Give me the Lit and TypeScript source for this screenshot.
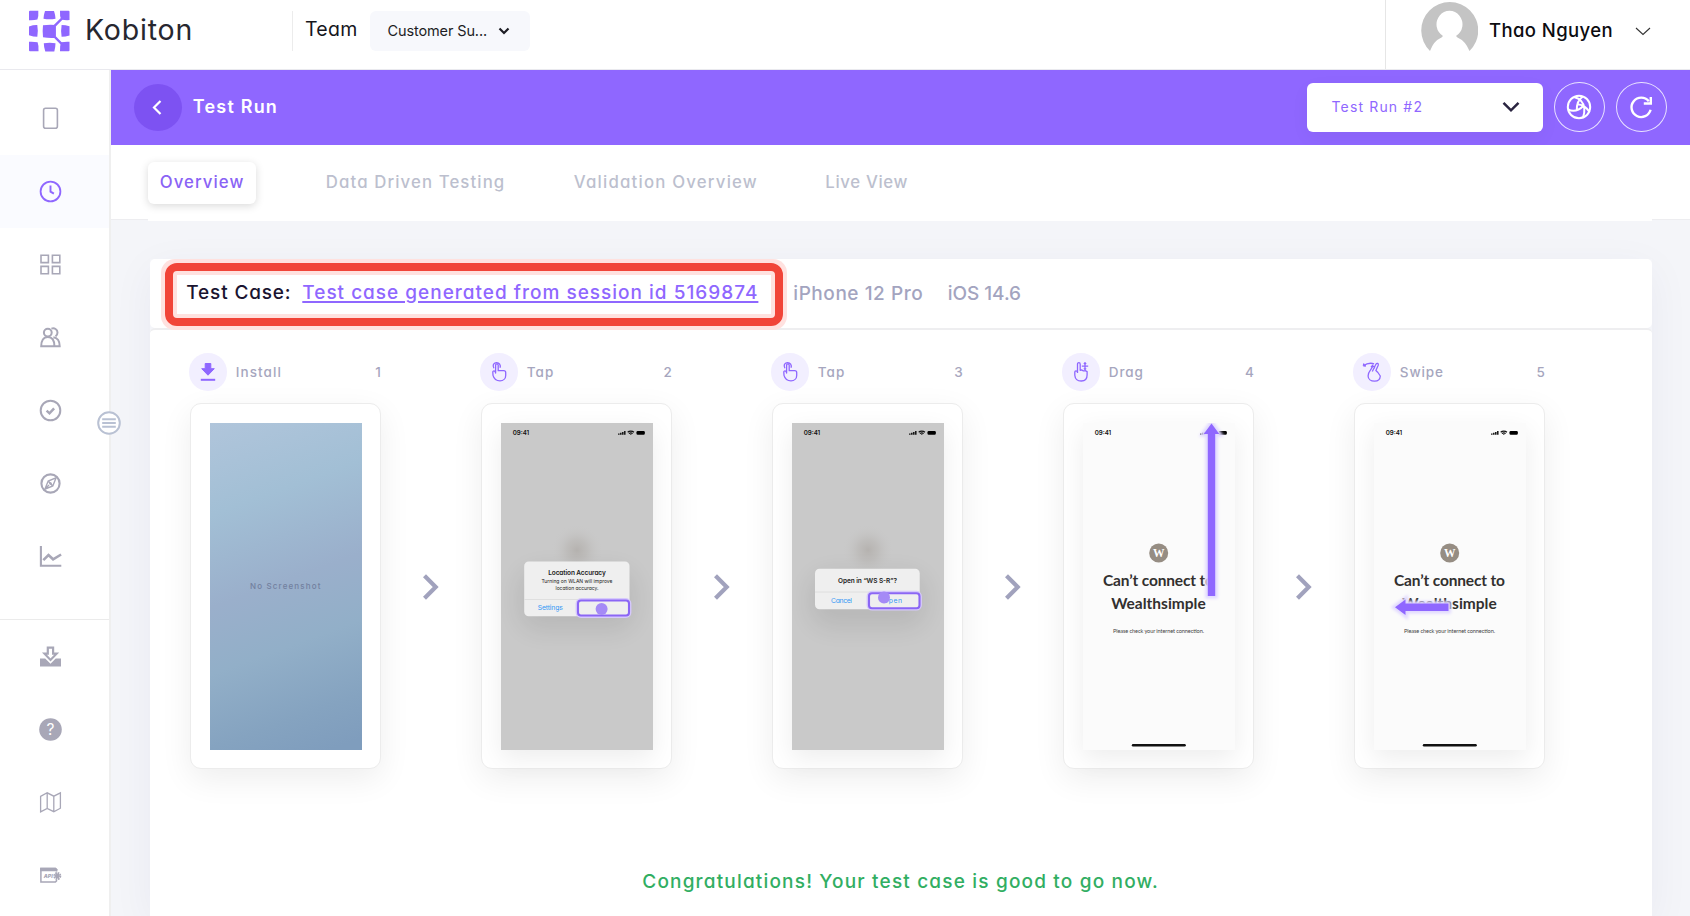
import { LitElement, html, css, svg, nothing } from "lit";
import { customElement, property } from "lit/decorators.js";
import { classMap } from "lit/directives/class-map.js";

type StepKind = "install" | "tap" | "drag" | "swipe";
interface Step {
  kind: StepKind;
  label: string;
  screen: "empty" | "location" | "open" | "drag" | "swipe";
}

const STEPS: Step[] = [
  { kind: "install", label: "Install", screen: "empty" },
  { kind: "tap", label: "Tap", screen: "location" },
  { kind: "tap", label: "Tap", screen: "open" },
  { kind: "drag", label: "Drag", screen: "drag" },
  { kind: "swipe", label: "Swipe", screen: "swipe" },
];

const NAV = {
  device: svg`<rect x="4.6" y="1.2" width="13.8" height="20" rx="2" stroke-width="1.6"/>`,
  history: svg`<circle cx="11.5" cy="11.5" r="9.9" stroke-width="1.8"/><path d="M11.5 5.6v6l3.4 2" stroke-width="1.9"/>`,
  apps: svg`<path d="M2 2.2h7.4v7.4H2zM13.4 2.2h7.4v7.4h-7.4zM2 13.4h7.4v7.4H2zM13.4 13.4h7.4v7.4h-7.4z" stroke-width="1.6"/>`,
  users: svg`<circle cx="8.8" cy="6.6" r="3.9" stroke-width="2"/><path d="M2.2 20.2c0-5.6 2.2-9.3 6.6-9.3s6.6 3.700 6.600 9.300zM12.400 2.600c3-1 6.100.7 6.100 4 0 1.700-.7 3-2 3.800M14.400 11.200c3.900.3 6.300 3.900 6.300 9h-5.300" stroke-width="2"/>`,
  check: svg`<circle cx="11.500" cy="11.500" r="9.800" stroke-width="2"/><path d="M7.600 11.600l2.900 2.700 4.600-5" stroke-width="2.500"/>`,
  compass: svg`<circle cx="11.500" cy="11.500" r="9.100" stroke-width="2.100"/><path d="M17 5.900l-3.200 8-7.900 3.200 3.300-8zM9.200 9.100l4.600 4.800M6 17l4-4" stroke-width="1.400"/><circle cx="11.500" cy="11.500" r="1" stroke-width="1"/>`,
  chart: svg`<path d="M1.900 1v19.800h20.400" stroke-width="2.100"/><path d="M4.300 15.200l5.200-5.200 4.600 4.300 8-4.800" stroke-width="2.600"/>`,
  download: svg`<path d="M1 13.500h5.200l5.300 5.200 5.200-5.200h5.300v7.900H1z" fill="currentColor" stroke="none"/><path d="M8.800 2.700h5.300v6h3.500l-6.100 6.300-6-6.300h3.300z" stroke-width="2.200"/>`,
  help: svg`<circle cx="11.500" cy="11.500" r="11.300" fill="currentColor" stroke="none"/><text class="q" x="11.500" y="17" text-anchor="middle">?</text>`,
  map: svg`<path d="M1.600 5.400l6.600-3.600 6.600 3.400 6.600-3.400v15.400l-6.600 3.500-6.600-3.300-6.600 3.500zM8.200 1.800v15.600M14.800 5.200v15.500" stroke-width="1.300"/>`,
  api: svg`<path d="M17.500 7.500V5.600L16.400 4.500H1.900V18h14.500l1.100-1.100v-1.300" stroke-width="1.500"/><path d="M1.100 3.800h15.700l1.500 1.500v1.900H1.100z" fill="currentColor" stroke="none"/><text class="api" x="4.700" y="14" textLength="9">API</text><circle cx="18.300" cy="12" r="2.400" fill="currentColor" stroke="none"/><circle cx="18.300" cy="12" r="3" stroke-width="2" stroke-dasharray="1.570 .785"/>`,
};

@customElement("nav-rail")
class NavRail extends LitElement {
  static styles = css`
    :host { display: block; box-sizing: border-box; width: 110.800px; border-right: 2.500px solid #efefef; background: #fff; padding-top: 11.500px; position: relative; }
    .item { height: 73px; display: grid; place-items: center; color: #a8a7b7; padding-right: 7.500px; box-sizing: border-box; }
    .item.active { background: #fafbff; color: #8f67ff; }
    .split { border-top: 1px solid #ebebeb; margin: 26px 0 0; }
    svg { width: 23px; height: 23px; fill: none; stroke: currentColor; overflow: visible; }
    .q { font: 400 15.500px Inter, sans-serif; fill: #fff; stroke: none; }
    .api { font: italic 900 5px Inter, sans-serif; fill: currentColor; stroke: none; }
    .toggle { position: absolute; right: -12.500px; top: 341px; width: 24px; height: 24px; color: #b9c1d3; }
  `;
  private item(name: keyof typeof NAV) {
    return html`<div class=${classMap({ item: true, active: name === "history" })}>
      <svg viewBox="0 0 23 23">${NAV[name]}</svg>
    </div>`;
  }
  render() {
    const top: (keyof typeof NAV)[] = ["device", "history", "apps", "users", "check", "compass", "chart"];
    const bottom: (keyof typeof NAV)[] = ["download", "help", "map", "api"];
    return html`${top.map((n) => this.item(n))}
      <div class="split"></div>
      ${bottom.map((n) => this.item(n))}
      <svg class="toggle" viewBox="0 0 24 24">
        <circle cx="12" cy="12" r="10.800" fill="#fff" stroke-width="2" />
        <path d="M5.200 8.200h13.600M5.200 12h13.600M5.200 15.800h13.600" stroke-width="2.100" />
      </svg>`;
  }
}

const glyphs = {
  install: svg`<path d="M9.200 3.500h5.600v5.200h3.500L12 15.200 5.700 8.700h3.500z" fill="currentColor" stroke-width="1"/><path d="M4.800 19.800h14.400" stroke-width="2"/>`,
  tap: svg`<path d="M8.600 13V5.300c0-2 2.600-2 2.600 0v5.400h5.500c1.300 0 2 .8 2 1.900v2.800c0 3.400-2.500 5.400-5.700 5.400-3.400 0-6-1.900-7-5.500l-.2-3.300c0-1.500 2.500-1.500 2.800.8zM6.900 8.200C5.400 5.600 6.300 3 9.300 2.600c3-.2 4.700 2.400 3.700 5.200"/>`,
  drag: svg`<path d="M8.500 13V4.200c0-2.100 2.700-2.100 2.700 0v6.100l1.200-.5 2 1 1.900-.1 1.800.9V15c0 3.700-2.300 6-5.800 6-3.600 0-6.200-2.300-6.500-5.800V12c0-1.500 2.200-1.500 2.700 0M16 3v6.400M12.800 6.200h6.400M14.900 4l1.100-1.200L17.100 4M14.900 8.400l1.100 1.200 1.100-1.200"/>`,
  swipe: svg`<path d="M3.300 5.800c3.700-2.600 7.500-3 10.800-2M3.300 5.800l2.600.2M3.300 5.800l.6-2.300M12.300 11.500l3.600-7.200c1-1.800 3-.9 2.300 1l-2.300 5.200 2 2 2.400 3.500c-.2 3.200-2.400 5.200-5.700 5.200-3.700 0-6.500-2-6.500-5.300 0-2.200.9-3.900 2.300-5.700l2-3.200c.9-1.500 2.700-.4 2 1.200M11 7.300l2-2.300"/>`,
};

const statusBar = svg`
  <text class="clock" x="11.700" y="12.300">09:41</text>
  <path d="M117.800 11.800v-1.200M119.800 11.800v-2M121.800 11.800v-2.900M123.800 11.800V8" stroke="#111" stroke-width="1.500"/>
  <path d="M126.700 9.200c1.600-1.500 4.600-1.500 6.200 0M128 10.600c1-.9 2.600-.9 3.600 0M129.800 12v-.8" stroke="#111" stroke-width="1.200" fill="none"/>
  <rect x="135.500" y="8" width="8.300" height="3.800" rx="1.200" fill="#000"/>`;

const blob = svg`<defs><radialGradient id="b"><stop offset="0" stop-color="#b5b2af"/><stop offset=".4" stop-color="#bcbab8" stop-opacity=".75"/><stop offset="1" stop-color="#c9c9c9" stop-opacity="0"/></radialGradient>
  <filter id="s" x="-50%" y="-80%" width="200%" height="300%"><feGaussianBlur stdDeviation="12"/></filter></defs>
  <rect width="152" height="327" fill="#c9c9c9"/>
  <circle cx="76" cy="127" r="26" fill="url(#b)"/>`;

const target = (x: number, y: number, w: number, h: number) => svg`
  <rect x=${x - 1.5} y=${y - 1.5} width=${w + 3} height=${h + 3} rx="4.500" fill="none" stroke="#d6c9fc" stroke-width="1.800"/>
  <rect x=${x} y=${y} width=${w} height=${h} rx="3" fill="none" stroke="#8b66f5" stroke-width="2.100"/>`;

const offline = svg`
  <rect width="152" height="327" fill="#fbfbfb"/>
  ${statusBar}
  <circle cx="75.700" cy="130" r="9.500" fill="#968d83"/>
  <text class="w" x="75.700" y="134" text-anchor="middle">W</text>
  <text class="head" x="75.500" y="162.800" text-anchor="middle" textLength="111">Can’t connect to</text>
  <text class="head" x="75.500" y="185.800" text-anchor="middle" textLength="94.500">Wealthsimple</text>
  <text class="note" x="75.500" y="210" text-anchor="middle" textLength="91">Please check your internet connection.</text>
  <rect x="48.800" y="321" width="54" height="2.400" rx="1.200" fill="#111"/>`;

const arrow = (d: string) => svg`
  <defs><filter id="g" x="-60%" y="-60%" width="220%" height="220%"><feGaussianBlur stdDeviation="1.600"/></filter></defs>
  <path d=${d} fill="#e6dfff" stroke="#e0d8ff" stroke-width="5" filter="url(#g)"/>
  <path d=${d} fill="#8f67ff"/>`;

const screens = {
  empty: svg`
    <defs><linearGradient id="e" x1="0" y1="0" x2="119" y2="327" gradientUnits="userSpaceOnUse">
      <stop offset="0" stop-color="#b0c5db"/><stop offset=".25" stop-color="#a2bfd5"/><stop offset=".5" stop-color="#9aafcb"/>
      <stop offset=".68" stop-color="#92afc8"/><stop offset=".88" stop-color="#85a3c0"/><stop offset="1" stop-color="#7f9dbd"/>
    </linearGradient></defs>
    <rect width="152" height="327" fill="url(#e)"/>
    <text class="none" x="75.200" y="166.300" text-anchor="middle" textLength="70.500">No Screenshot</text>`,
  location: svg`${blob}${statusBar}
    <rect x="18" y="146" width="116" height="62" rx="20" fill="#000" opacity=".08" filter="url(#s)"/>
    <rect x="23.200" y="138.500" width="105.300" height="54.800" rx="4.500" fill="#efefef"/>
    <path d="M23.200 176.500h105.300" stroke="#dadada" stroke-width=".8"/>
    <text class="title" x="76" y="152.400" text-anchor="middle" textLength="57.500">Location Accuracy</text>
    <text class="body" x="76" y="160.300" text-anchor="middle" textLength="71">Turning on WLAN will improve</text>
    <text class="body" x="76" y="167" text-anchor="middle" textLength="43">location accuracy.</text>
    <text class="link" x="49.300" y="187.300" text-anchor="middle" textLength="25">Settings</text>
    ${target(77, 177.500, 51, 15)}
    <circle cx="100.600" cy="186" r="6" fill="#a58af6"/>`,
  open: svg`${blob}${statusBar}
    <rect x="18" y="150" width="116" height="55" rx="20" fill="#000" opacity=".08" filter="url(#s)"/>
    <rect x="23" y="145.800" width="104.700" height="40.500" rx="4.500" fill="#efefef"/>
    <path d="M23 169h104.700" stroke="#dadada" stroke-width=".8"/>
    <text class="title" x="75.500" y="160" text-anchor="middle" textLength="59">Open in “WS S-R”?</text>
    <text class="link" x="49.500" y="180.300" text-anchor="middle" textLength="21">Cancel</text>
    <text class="link" x="100.500" y="180.300" text-anchor="middle" textLength="19">Open</text>
    ${target(77, 170.200, 50.500, 15)}
    <circle cx="92" cy="174.500" r="6" fill="#a58af6"/>`,
  drag: svg`${offline}${arrow("M128.500.500L136.300 11H132.200V173H124.800V11H120.700Z")}`,
  swipe: svg`${offline}${arrow("M21 184.300L31.500 176.500V180.600H74.500V188H31.500V192.100Z")}`,
};

@customElement("step-card")
class StepCard extends LitElement {
  @property({ attribute: false }) step!: Step;
  @property({ type: Number }) index = 1;
  static styles = css`
    :host { display: block; width: 191px; }
    .top { display: flex; align-items: center; height: 38px; font: 500 13.500px/38px Inter, sans-serif; font-feature-settings: "cv11"; letter-spacing: 1.050px; color: #a6a6be; }
    .icon { width: 37.500px; height: 37.500px; border-radius: 50%; background: #f2efff; display: grid; place-items: center; margin-right: 9px; margin-left: -.500px; }
    .icon svg { width: 24px; height: 24px; color: #8f67ff; stroke: currentColor; fill: none; stroke-width: 1.300; stroke-linejoin: round; }
    .top .swipe, .top .drag { letter-spacing: .900px; }
    .num { margin-left: auto; letter-spacing: 0; }
    .frame { margin-top: 12px; box-sizing: border-box; height: 366px; border: 1px solid #ececec; border-radius: 11px; background: #fff; padding: 18.500px 0 0 19px; box-shadow: 0 10px 32px rgba(0, 0, 0, 0.070); }
    .screen { display: block; width: 152px; height: 327px; }
    .screen.shot { box-shadow: 0 8px 24px rgba(0, 0, 0, 0.075); }
    text { font-family: Inter, sans-serif; }
    .clock { font-size: 6.200px; font-weight: 600; fill: #111; }
    .none { font-size: 8px; font-weight: 500; fill: #72809f; font-feature-settings: "cv11"; }
    .title { font-size: 6.500px; font-weight: 600; fill: #1c1c1c; }
    .body { font-size: 5px; fill: #222; }
    .link { font-size: 6.800px; fill: #3498f5; }
    .w { font-family: "Liberation Serif", serif; font-weight: 700; font-size: 11.500px; fill: #fff; }
    .head { font-family: Lato, sans-serif; font-weight: 700; font-size: 15.500px; fill: #32302f; }
    .note { font-family: Lato, sans-serif; font-size: 5.600px; fill: #444; }
  `;
  render() {
    const s = this.step;
    return html`
      <div class="top">
        <span class="icon"><svg viewBox="0 0 24 24">${glyphs[s.kind]}</svg></span>
        <span class=${s.kind}>${s.label}</span><span class="num">${this.index}</span>
      </div>
      <div class="frame">
        <svg class=${classMap({ screen: true, shot: s.screen !== "empty" })} viewBox="0 0 152 327">${screens[s.screen]}</svg>
      </div>`;
  }
}

@customElement("app-root")
class AppRoot extends LitElement {
  static styles = css`
    :host { display: flex; flex-direction: column; height: 916px; overflow: hidden; background: #fff; font-family: Inter, sans-serif; font-feature-settings: "cv11"; }
    * { box-sizing: border-box; }
    svg { display: block; fill: none; flex: none; }
    header { height: 70px; flex: none; display: flex; border-bottom: 1px solid #e9e9ee; align-items: flex-start; }
    .logo { width: 42px; height: 42px; margin: 10px 0 0 27.500px; }
    .brand { font-size: 28.500px; line-height: 60px; letter-spacing: .800px; color: #27272f; margin-left: 14.500px; width: 207px; padding-left: 1px; }
    .vr { width: 1px; height: 40px; margin-top: 11px; background: #ececec; margin-left: 1px; }
    .team { font-size: 19.500px; line-height: 58px; letter-spacing: .300px; margin-left: 12px; width: 65px; color: #16161c; }
    .team-select { width: 160px; height: 40px; margin-top: 11px; border-radius: 6px; background: #f7f8fc; display: flex; align-items: center; gap: 11px; padding: 0 0 1px 17.500px; font-size: 14.500px; letter-spacing: -.120px; color: #1d1d24; }
    .user { margin-left: auto; width: 305px; height: 69px; border-left: 1px solid #e6e6e6; display: flex; align-items: flex-start; padding-left: 35px; }
    .user .name { font-size: 18.500px; font-weight: 500; line-height: 60px; letter-spacing: .400px; color: #0c0c10; margin-left: 11px; width: 146px; }
    .user .down { margin-top: 27px; }
    .body { flex: 1; display: flex; min-height: 0; }
    nav-rail { flex: none; z-index: 1; }
    main { flex: 1; min-width: 0; background: #f4f5f9; display: flex; flex-direction: column; }
    .bar { height: 75px; flex: none; background: #8f67ff; display: flex; align-items: center; padding: 0 23.500px 1px 23px; }
    .back { width: 48px; height: 47px; border-radius: 50%; background: #7d52f2; display: grid; place-items: center; }
    .back svg { margin-right: 1px; }
    h1 { margin: 0 auto 0 11px; font-size: 18px; font-weight: 600; letter-spacing: 1.200px; color: #fff; line-height: 40px; padding-bottom: 1px; }
    .run { width: 236px; height: 49px; border-radius: 6px; background: #fff; display: flex; align-items: center; justify-content: space-between; padding: 0 23px 1px 24.500px; font-size: 14px; letter-spacing: 1.150px; color: #8f67ff; margin-right: 11px; box-shadow: 0 6px 20px rgba(0, 0, 0, .040); }
    .round { width: 50.500px; height: 50px; border: 1.500px solid #e9e2ff; border-radius: 50%; display: grid; place-items: center; margin-right: 11.500px; color: #fff; }
    .round:last-child { margin-right: 0; }
    .tabs-wrap { background: #fff; height: 75px; flex: none; padding: 0 38px 0 37px; border-bottom: 1px solid #ededf0; }
    .tabs { background: #fff; height: 76px; display: flex; align-items: center; position: relative; font-size: 16.800px; font-weight: 450; color: #bcbfce; }
    .tab { height: 42px; line-height: 41px; white-space: nowrap; }
    .tab.current { color: #8a63f5; border-radius: 6px; background: #fff; width: 108px; padding-left: 12px; letter-spacing: 1.050px; box-shadow: 0 2px 9px rgba(0, 0, 0, .150); }
    .t2 { margin-left: 70px; width: 248px; letter-spacing: 1.100px; }
    .t3 { width: 251.500px; letter-spacing: 1.200px; }
    .t4 { letter-spacing: .650px; }
    .content { flex: 1; margin: 39px 38.500px 0 39px; display: flex; flex-direction: column; box-shadow: 0 10px 40px rgba(30, 30, 90, .050); }
    .case { height: 69px; flex: none; background: #fff; border-radius: 5px; display: flex; align-items: center; font-size: 19px; font-weight: 500; color: #a3a4bf; padding-left: 11px; }
    .mark { flex: none; height: 71px; width: 626px; margin: 1px 0 0; padding: 4px; border-radius: 14px; background: #ffe1df; position: relative; }
    .mark-in { height: 63px; border: 8px solid #f14438; border-radius: 12px; background: #ffe1df; padding: 4px; }
    .mark-text { height: 39px; background: #fff; display: flex; align-items: center; padding: 0 0 3px 9.500px; white-space: nowrap; }
    .lbl { color: #1a1430; width: 116px; letter-spacing: .850px; }
    .lnk { color: #8f67ff; letter-spacing: 1px; text-decoration: underline; text-decoration-thickness: 1.500px; text-underline-offset: 2px; text-decoration-skip-ink: auto; }
    .dev { margin-left: 6.500px; width: 154.500px; letter-spacing: .550px; }
    .os { letter-spacing: -.050px; }
    .dev, .os { padding-bottom: 1px; }
    .flow { flex: 1; background: #fff; border-top: 2px solid #eeeef0; border-radius: 5px 5px 0 0; padding: 23px 0 0 40px; }
    .steps { display: flex; }
    .next { width: 100px; display: flex; justify-content: center; padding-top: 221px; }
    .done { text-align: center; margin: 93px 0 0 -40px; font-size: 19px; font-weight: 500; line-height: 40px; letter-spacing: 1.180px; color: #31ae62; }
  `;
  render() {
    return html`
      <header>
        <svg class="logo" viewBox="0 0 41 42">
          <g fill="#8f67ff">
            <path d="M1.500.800h8.300q.4 5.500-.9 8.800-3.500.8-8.400.600V1.800q0-1 1-1z"/>
            <path d="M16.500 1h9q1.500 4.500 1.500 7.800-6 1-12 0 0-3.300 1.500-7.800z"/>
            <path d="M31.500.800h8.500q1 0 1 1v8.300q-4.500.300-8.300-.5-1.600-3.500-1.200-8.800z"/>
            <path d="M.500 16.500q4.500-1.600 8.300-1.400 1 6 0 11.700-3.800 0-8.300-1.500z"/>
            <path d="M14.500 15.300q6-1 12.300-.4l-.2 13q-6 .5-12.100-.600-.7-6 0-12z"/>
            <path d="M41 16.300q-4-1.200-7.900-1.200-1 6 0 11.700 3.900 0 7.900-1.300z"/>
            <path d="M.500 31.700q4.800-.3 8.600.600 1.300 3.500.900 9H1.500q-1 0-1-1z"/>
            <path d="M15.300 33.200q6-1 11.700 0 0 3.800-1.200 8.200h-9q-1.500-4.200-1.500-8.200z"/>
            <path d="M41 31.700q-4.500-.3-8.300.600-1.600 3.500-1.200 9h8.500q1 0 1-1z"/>
          </g>
          <path d="M34.500 7.500l-8.300 8.300v11l8.500 8.700" stroke="#8f67ff" stroke-width="2.400"/>
        </svg>
        <div class="brand">Kobiton</div>
        <div class="vr"></div>
        <div class="team">Team</div>
        <div class="team-select">Customer Su...
          <svg width="12" height="8" viewBox="0 0 12 8"><path d="M1.500 1.500L6 6l4.500-4.500" stroke="#1d1d24" stroke-width="2.200"/></svg>
        </div>
        <div class="user">
          <svg width="57" height="52" viewBox="0 0 57 52">
            <path d="M9 51A28.500 28.500 0 1 1 48.500 51Q44.500 41 36.500 37.500L35 36A13 13.500 0 1 0 22 36l-1.500 1.500Q12.500 41 9 51z" fill="#c4c4c4"/>
          </svg>
          <div class="name">Thao Nguyen</div>
          <svg class="down" width="16" height="9" viewBox="0 0 16 9"><path d="M1 1l7 6.500L15 1" stroke="#333" stroke-width="1.100"/></svg>
        </div>
      </header>
      <div class="body">
        <nav-rail></nav-rail>
        <main>
          <div class="bar">
            <div class="back"><svg width="10" height="15" viewBox="0 0 10 15"><path d="M8.500 1L2 7.500 8.500 14" stroke="#fff" stroke-width="2.200"/></svg></div>
            <h1>Test Run</h1>
            <div class="run">Test Run #2
              <svg width="18" height="12" viewBox="0 0 18 12"><path d="M1.500 1.800L9 9.300l7.500-7.500" stroke="#2a2440" stroke-width="2.500"/></svg>
            </div>
            <div class="round">
              <svg width="26" height="26" viewBox="0 0 26 26" stroke="#fff" stroke-width="2">
                <circle cx="13" cy="13" r="11.200"/>
                <path d="M17 2.500Q10.500 6.500 10.800 16.300M8 3Q17.500 5.500 18.300 14.500 18.700 19 17 23.500M2 15.500Q10 19.500 17.800 11.500M11.200 10.200Q19 10.500 23.500 18"/>
              </svg>
            </div>
            <div class="round">
              <svg width="26" height="26" viewBox="0 0 26 26" stroke="#fff" stroke-width="2.400">
                <path d="M20.800 7.300A9.700 9.700 0 1 0 22.600 15.800"/><path d="M22.800 3v6.500h-7"/>
              </svg>
            </div>
          </div>
          <div class="tabs-wrap">
            <div class="tabs">
              <div class="tab current">Overview</div>
              <div class="tab t2">Data Driven Testing</div>
              <div class="tab t3">Validation Overview</div>
              <div class="tab t4">Live View</div>
            </div>
          </div>
          <div class="content">
            <div class="case">
              <div class="mark"><div class="mark-in"><div class="mark-text">
                <span class="lbl">Test Case:</span><span class="lnk">Test case generated from session id 5169874</span>
              </div></div></div>
              <span class="dev">iPhone 12 Pro</span><span class="os">iOS 14.6</span>
            </div>
            <div class="flow">
              <div class="steps">
                ${STEPS.map((s, i) => html`
                  <step-card .step=${s} .index=${i + 1}></step-card>
                  ${i < STEPS.length - 1
                    ? html`<div class="next"><svg width="17" height="26" viewBox="0 0 17 26"><path d="M2.500 1.800L13.700 13 2.500 24.200" stroke="#a1a2bd" stroke-width="4.200"/></svg></div>`
                    : nothing}`)}
              </div>
              <div class="done">Congratulations! Your test case is good to go now.</div>
            </div>
          </div>
        </main>
      </div>`;
  }
}
